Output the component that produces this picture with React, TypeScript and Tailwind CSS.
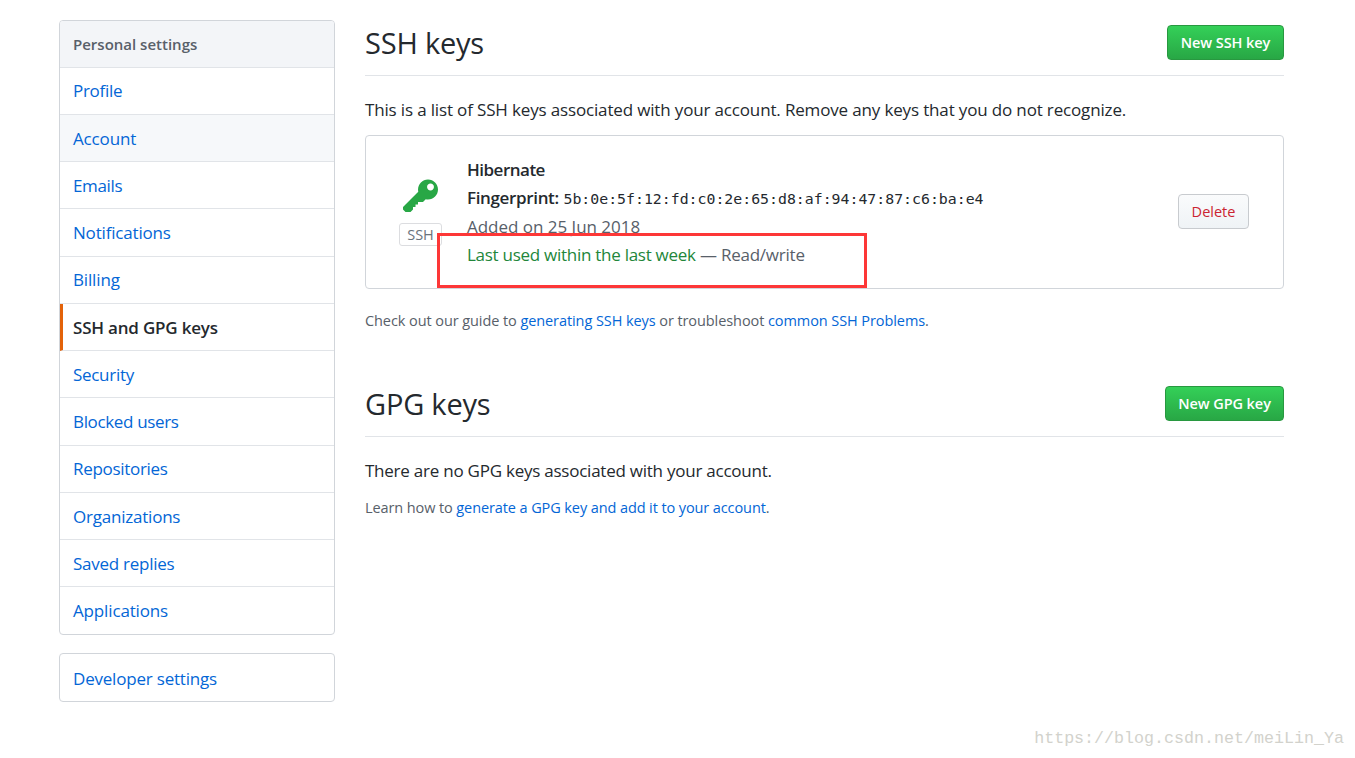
import type { ReactNode } from 'react'
import clsx from 'clsx'

type NavItem = {
	label: string
	tracking: string
	state?: 'selected' | 'hovered'
}

const navItems: NavItem[] = [
	{ label: 'Profile', tracking: 'tracking-[-0.3px]' },
	{ label: 'Account', tracking: 'tracking-[-0.15px]', state: 'hovered' },
	{ label: 'Emails', tracking: 'tracking-[-0.35px]' },
	{ label: 'Notifications', tracking: 'tracking-[-0.18px]' },
	{ label: 'Billing', tracking: 'tracking-[-0.15px]' },
	{ label: 'SSH and GPG keys', tracking: 'tracking-[-0.2px]', state: 'selected' },
	{ label: 'Security', tracking: 'tracking-[-0.3px]' },
	{ label: 'Blocked users', tracking: 'tracking-[-0.35px]' },
	{ label: 'Repositories', tracking: 'tracking-[-0.3px]' },
	{ label: 'Organizations', tracking: 'tracking-[-0.22px]' },
	{ label: 'Saved replies', tracking: 'tracking-[-0.26px]' },
	{ label: 'Applications', tracking: 'tracking-[-0.15px]' },
]

function KeyIcon() {
	return (
		<svg viewBox="0 0 14 16" className="h-10 w-[35px] fill-[#28a745]" aria-hidden="true">
			<path
				fillRule="evenodd"
				d="M12.83 2.17C12.08 1.42 11.14 1.03 10 1c-1.13.03-2.08.42-2.83 1.17S6.04 3.86 6.01 5c0 .3.03.59.09.89L0 12v1l1 1h2l1-1v-1h1v-1h1v-1h2l1.09-1.11c.3.08.59.11.91.11 1.14-.03 2.08-.42 2.83-1.17S13.97 6.14 14 5c-.03-1.14-.42-2.08-1.17-2.83zM11 5.38c-.77 0-1.38-.61-1.38-1.38 0-.77.61-1.38 1.38-1.38.77 0 1.38.61 1.38 1.38 0 .77-.61 1.38-1.38 1.38z"
			/>
		</svg>
	)
}

function Link({ children }: { children: ReactNode }) {
	return (
		<a href="#" className="text-[#0366d6]">
			{children}
		</a>
	)
}

function Sidebar() {
	return (
		<aside className="w-[276px] shrink-0">
			<nav className="overflow-hidden rounded-[4px] border border-[#d1d5da] bg-white">
				<h3 className="flex h-[46.6px] items-center border-b border-[#e1e4e8] bg-[#f3f5f8] px-[13px] text-[15px] font-semibold text-[#586069]">
					Personal settings
				</h3>
				{navItems.map(({ label, tracking, state }) => (
					<a
						key={label}
						href="#"
						className={clsx(
							'flex h-[47.25px] items-center border-b border-[#e1e4e8] pt-px text-[17px] last:h-[46.4px] last:border-b-0',
							tracking,
							state === 'selected'
								? 'border-l-[3px] border-l-[#e36209] pl-[10px] font-semibold text-[#24292e]'
								: 'pl-[13px] text-[#0366d6]',
							state === 'hovered' && 'bg-[#f6f8fa]',
						)}
					>
						{label}
					</a>
				))}
			</nav>
			<nav className="mt-[18px] rounded-[4px] border border-[#d1d5da]">
				<a href="#" className="flex h-[47px] items-center pt-[3px] pl-[13px] text-[17px] tracking-[-0.2px] text-[#0366d6]">
					Developer settings
				</a>
			</nav>
		</aside>
	)
}

type SectionHeaderProps = {
	title: string
	action: string
	buttonWidth: string
}

function SectionHeader({ title, action, buttonWidth }: SectionHeaderProps) {
	return (
		<div className="flex h-14 items-start justify-between border-b border-[#e1e4e8]">
			<h2 className="text-[29px] leading-[45px] tracking-[-0.2px]">{title}</h2>
			<button
				className={clsx(
					'mt-[5px] flex h-[35px] items-center justify-center rounded-[4px] border border-[#289840] bg-linear-to-b from-[#34d058] to-[#28a745] text-[14.5px] font-semibold tracking-[-0.07px] whitespace-nowrap text-white',
					buttonWidth,
				)}
			>
				{action}
			</button>
		</div>
	)
}

function KeyCard() {
	return (
		<div className="relative mt-[12px] flex h-[154px] rounded-[4px] border border-[#d1d5da]">
			<div className="ml-[33px] flex w-[43px] flex-col items-center pt-[40.5px]">
				<KeyIcon />
				<span className="mt-[6.5px] flex h-[23px] w-[43px] items-center justify-center rounded-[3px] border border-[#dcdde0] text-[14.5px] text-[#6a737d]">
					SSH
				</span>
			</div>
			<ul className="ml-[25px] flex-1 pt-[20px] text-[17px] leading-[28.3px] text-[#586069]">
				<li className="font-semibold tracking-[-0.5px] text-[#24292e]">Hibernate</li>
				<li className="flex h-[28.3px] items-baseline">
					<span className="w-[96.5px] font-semibold tracking-[-0.35px] text-[#24292e]">Fingerprint:</span>
					<code className="font-['DejaVu_Sans_Mono',monospace] text-[14.85px] text-[#24292e]">
						5b:0e:5f:12:fd:c0:2e:65:d8:af:94:47:87:c6:ba:e4
					</code>
				</li>
				<li className="tracking-[-0.02px]">Added on 25 Jun 2018</li>
				<li className="tracking-[-0.23px]">
					<span className="tracking-[-0.27px] text-[#22863a]">Last used within the last week</span> — Read/write
				</li>
			</ul>
			<button className="mt-[58px] mr-[34px] h-[35px] w-[71px] rounded-[4px] border border-[#c8cbcf] bg-linear-to-b from-[#fafbfc] to-[#eff3f6] text-[14.5px] font-medium text-[#cb2431]">
				Delete
			</button>
			{/* annotation frame drawn over the last line */}
			<div className="absolute top-[97px] left-[71px] h-[55px] w-[430px] border-[3px] border-[#fd3737]" />
		</div>
	)
}

export default function App() {
	return (
		<div className="flex h-[758px] flex-col overflow-hidden bg-white font-['Open_Sans','Noto_Sans',sans-serif] text-[#24292e]">
			<div className="flex h-[702px] pt-5 pl-[59px]">
				<Sidebar />
				<main className="ml-[30px] w-[919px]">
					<section className="h-[361px]">
						<SectionHeader title="SSH keys" action="New SSH key" buttonWidth="w-[117px]" />
						<p className="mt-[21px] text-[17px] leading-[26px] tracking-[-0.155px] whitespace-nowrap">
							This is a list of SSH keys associated with your account. Remove any keys that you do not recognize.
						</p>
						<KeyCard />
						<p className="mt-[21px] text-[14.5px] leading-[22px] tracking-[-0.08px] text-[#586069]">
							Check out our guide to <Link>generating SSH keys</Link> or troubleshoot{' '}
							<Link>common SSH Problems</Link>.
						</p>
					</section>
					<section>
						<SectionHeader title="GPG keys" action="New GPG key" buttonWidth="w-[119px]" />
						<p className="mt-[21px] text-[17px] leading-[26px] tracking-[-0.24px]">
							There are no GPG keys associated with your account.
						</p>
						<p className="mt-[13px] text-[14.5px] leading-[22px] tracking-[-0.1px] text-[#586069]">
							Learn how to <Link>generate a GPG key and add it to your account</Link>.
						</p>
					</section>
				</main>
			</div>
			<footer className="mt-[25px] mr-[11px] self-end font-['Liberation_Mono',monospace] text-[16.67px] leading-6 text-[#d2d2cc]">
				https://blog.csdn.net/meiLin_Ya
			</footer>
		</div>
	)
}
